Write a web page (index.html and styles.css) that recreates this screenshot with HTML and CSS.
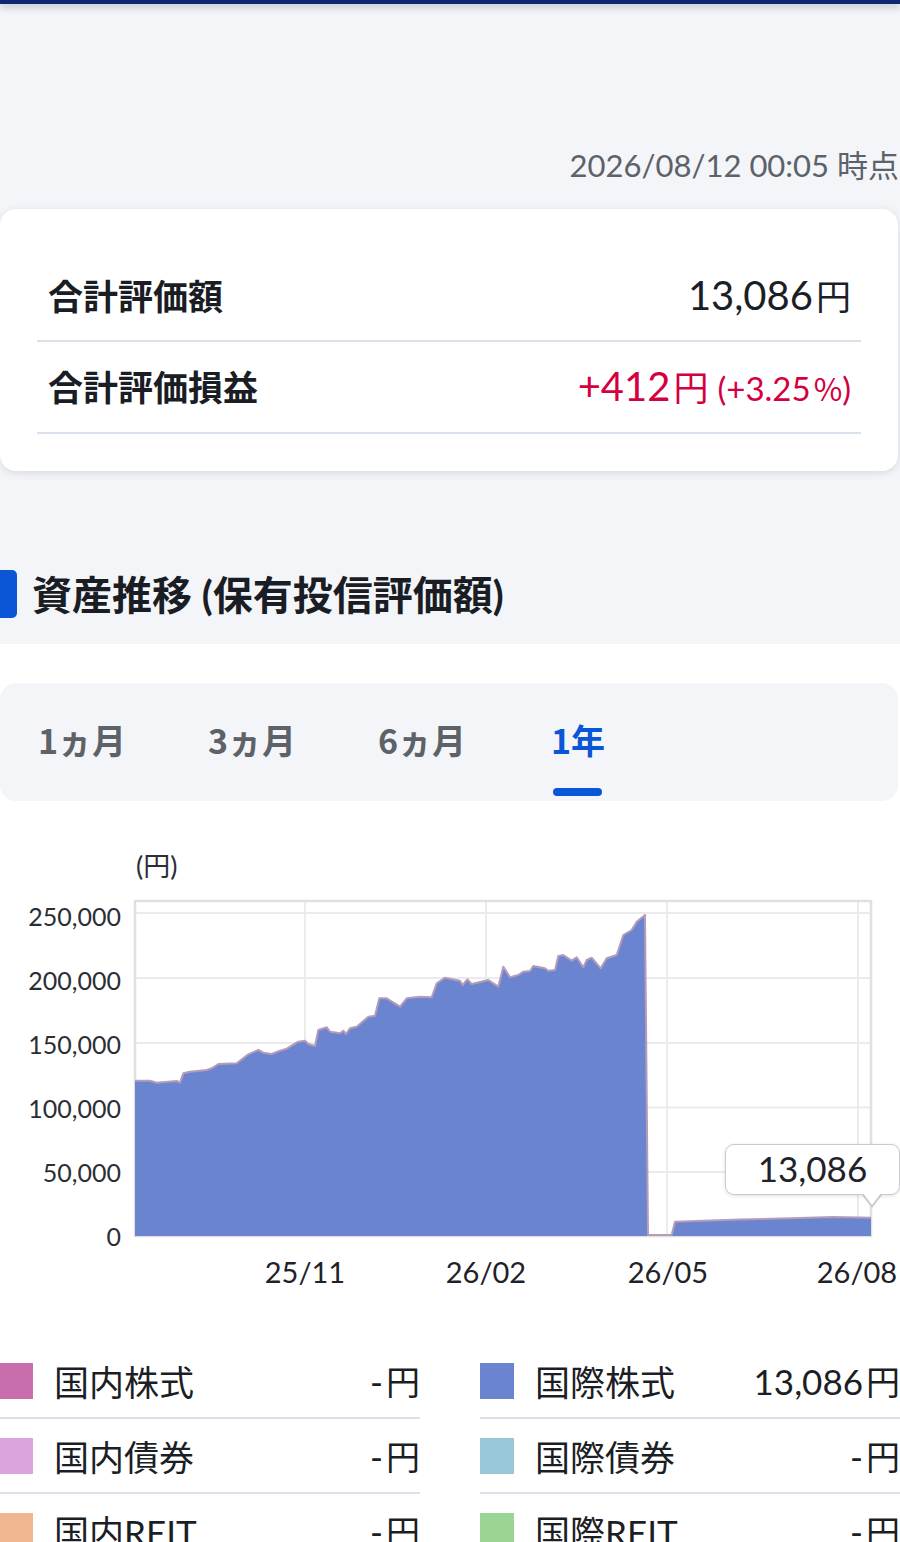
FILE: index.html
```html
<!DOCTYPE html>
<html lang="ja">
<head>
<meta charset="utf-8">
<title>資産推移</title>
<link rel="stylesheet" href="styles.css">
</head>
<body>
<div class="topbar"></div>
<div class="timestamp">2026/08/12 00:05 時点</div>

<section class="card">
  <div class="row row-total">
    <span class="label">合計評価額</span>
    <span class="value"><span class="num">13,086</span><span class="yen">円</span></span>
  </div>
  <div class="row row-gain">
    <span class="label">合計評価損益</span>
    <span class="value gain"><span class="num">+412</span><span class="yen">円</span><span class="pct">(+3.25<span class="pct-sign">%</span>)</span></span>
  </div>
</section>

<div class="section-head">
  <span class="head-bar"></span>
  <h2 class="head-title">資産推移 (保有投信評価額)</h2>
</div>

<section class="chart-section">
  <div class="tabs">
    <span class="tab">1ヵ月</span>
    <span class="tab">3ヵ月</span>
    <span class="tab">6ヵ月</span>
    <span class="tab active">1年</span>
  </div>

  <div class="chart">
    <svg class="chart-svg" width="900" height="500" viewBox="0 801 900 500" xmlns="http://www.w3.org/2000/svg">
      <g class="grid">
        <line x1="305" y1="901" x2="305" y2="1236"/>
        <line x1="486" y1="901" x2="486" y2="1236"/>
        <line x1="667" y1="901" x2="667" y2="1236"/>
        <line x1="858" y1="901" x2="858" y2="1236"/>
        <line x1="135" y1="913" x2="871" y2="913"/>
        <line x1="135" y1="978" x2="871" y2="978"/>
        <line x1="135" y1="1043" x2="871" y2="1043"/>
        <line x1="135" y1="1107.5" x2="871" y2="1107.5"/>
        <line x1="135" y1="1172" x2="871" y2="1172"/>
      </g>
      <g class="frame">
        <line x1="135" y1="901" x2="871" y2="901"/>
        <line x1="135" y1="900" x2="135" y2="1237"/>
        <line x1="871" y1="900" x2="871" y2="1237"/>
        <line x1="135" y1="1236" x2="871" y2="1236"/>
      </g>
      <path class="area" d="M135,1236 L135,1080.7 L150,1080.7 L156.7,1082.7 L176.7,1081 L180,1082.7 L183.3,1073.3 L190,1071.7 L206.7,1070 L211.7,1068.3 L218.3,1064 L236.7,1063.3 L248.3,1054.3 L258.3,1050 L263.3,1052.7 L271.7,1054 L280,1050.7 L286.7,1048.7 L298.3,1041.7 L305,1040.7 L308.3,1044 L315,1046 L318.3,1030 L326.7,1027.3 L330,1031.7 L340,1033.3 L343.3,1030.7 L346,1034 L350,1028.3 L356.7,1026.7 L368.3,1016.7 L375,1015.7 L379.3,998.3 L386.7,998.3 L400,1006.7 L406.7,998.3 L420,996.7 L431.7,997.3 L436.7,983.3 L445,977.7 L460,980.7 L462.7,985 L467.3,979.3 L471.7,984 L488.3,980 L498.3,986.7 L503.3,966.7 L510,977.3 L518.3,975 L523.3,971.7 L530,971 L533.3,966 L545,968.3 L548.3,970.7 L555,970 L558.3,956 L563.3,955 L571.7,960.7 L576.7,957.3 L583.3,967.3 L586.7,960 L591.7,957.7 L600.7,968.3 L606.7,958.3 L616.7,955 L623.3,935 L631.7,930 L636.7,921.7 L645,915 L648,1236 Z M671.7,1236 L675,1221.7 L740,1219.5 L800,1218 L833,1217 L871,1217.7 L871,1236 Z"/>
      <path class="line" d="M135,1080.7 L150,1080.7 L156.7,1082.7 L176.7,1081 L180,1082.7 L183.3,1073.3 L190,1071.7 L206.7,1070 L211.7,1068.3 L218.3,1064 L236.7,1063.3 L248.3,1054.3 L258.3,1050 L263.3,1052.7 L271.7,1054 L280,1050.7 L286.7,1048.7 L298.3,1041.7 L305,1040.7 L308.3,1044 L315,1046 L318.3,1030 L326.7,1027.3 L330,1031.7 L340,1033.3 L343.3,1030.7 L346,1034 L350,1028.3 L356.7,1026.7 L368.3,1016.7 L375,1015.7 L379.3,998.3 L386.7,998.3 L400,1006.7 L406.7,998.3 L420,996.7 L431.7,997.3 L436.7,983.3 L445,977.7 L460,980.7 L462.7,985 L467.3,979.3 L471.7,984 L488.3,980 L498.3,986.7 L503.3,966.7 L510,977.3 L518.3,975 L523.3,971.7 L530,971 L533.3,966 L545,968.3 L548.3,970.7 L555,970 L558.3,956 L563.3,955 L571.7,960.7 L576.7,957.3 L583.3,967.3 L586.7,960 L591.7,957.7 L600.7,968.3 L606.7,958.3 L616.7,955 L623.3,935 L631.7,930 L636.7,921.7 L645,915 L648,1235 L671.7,1235 L675,1221.7 L740,1219.5 L800,1218 L833,1217 L871,1217.7"/>
      <g class="ylabels">
        <text x="136" y="865" class="unit">(円)</text>
        <text x="121" y="916">250,000</text>
        <text x="121" y="980">200,000</text>
        <text x="121" y="1044">150,000</text>
        <text x="121" y="1108">100,000</text>
        <text x="121" y="1172">50,000</text>
        <text x="121" y="1236">0</text>
      </g>
      <g class="xlabels">
        <text x="305" y="1271">25/11</text>
        <text x="486" y="1271">26/02</text>
        <text x="668" y="1271">26/05</text>
        <text x="857" y="1271">26/08</text>
      </g>
    </svg>
    <div class="tooltip">13,086</div>
  </div>

  <div class="legend">
    <div class="legend-col">
      <div class="legend-row"><span class="swatch sw-dstock"></span><span class="lg-label">国内株式</span><span class="lg-value"><span class="num">-</span>円</span></div>
      <div class="legend-row"><span class="swatch sw-dbond"></span><span class="lg-label">国内債券</span><span class="lg-value"><span class="num">-</span>円</span></div>
      <div class="legend-row"><span class="swatch sw-dreit"></span><span class="lg-label">国内REIT</span><span class="lg-value"><span class="num">-</span>円</span></div>
    </div>
    <div class="legend-col">
      <div class="legend-row"><span class="swatch sw-istock"></span><span class="lg-label">国際株式</span><span class="lg-value"><span class="num">13,086</span>円</span></div>
      <div class="legend-row"><span class="swatch sw-ibond"></span><span class="lg-label">国際債券</span><span class="lg-value"><span class="num">-</span>円</span></div>
      <div class="legend-row"><span class="swatch sw-ireit"></span><span class="lg-label">国際REIT</span><span class="lg-value"><span class="num">-</span>円</span></div>
    </div>
  </div>
</section>
</body>
</html>
```

FILE: styles.css
```css
* { box-sizing: border-box; }

html, body {
  margin: 0;
  padding: 0;
}

body {
  width: 900px;
  background: #f3f5f9;
  font-family: Lato, "Noto Sans CJK JP", sans-serif;
  color: #1b1e25;
  overflow: hidden;
}

.topbar {
  height: 4px;
  background: #112670;
  box-shadow: 0 3px 7px rgba(0, 0, 0, 0.28);
  position: relative;
  z-index: 1;
}

.timestamp {
  margin-top: 141px;
  height: 40px;
  line-height: 40px;
  text-align: right;
  font-size: 31px;
  color: #5d6168;
  padding-right: 1px;
  white-space: nowrap;
}

.card {
  margin-top: 24px;
  margin-right: 2px;
  background: #ffffff;
  border-radius: 16px;
  box-shadow: 0 2px 8px rgba(30, 40, 60, 0.13);
  padding: 43px 37px 37px;
}

.row {
  display: flex;
  align-items: center;
  justify-content: space-between;
  padding: 0 10px 3px 11px;
  border-bottom: 2px solid #d9e1ea;
}

.row-total { height: 90px; }
.row-gain { height: 92px; }

.label {
  font-family: "Noto Sans CJK JP", sans-serif;
  font-weight: 700;
  font-size: 35px;
  color: #1a1d24;
}

.value {
  display: flex;
  align-items: baseline;
  color: #1b1e25;
}

.value .num {
  font-size: 40px;
  font-family: Lato, sans-serif;
}

.value .yen {
  font-family: "Noto Sans CJK JP", sans-serif;
  font-size: 35px;
  margin-left: 3px;
}

.gain { color: #d4003f; }

.gain .pct {
  font-size: 33px;
  margin-left: 9px;
}

.pct-sign {
  font-family: "Noto Sans CJK JP", sans-serif;
  font-size: 31px;
  margin-left: 3px;
}

.section-head {
  margin-top: 99px;
  display: flex;
  align-items: center;
  height: 48px;
}

.head-bar {
  width: 17px;
  height: 48px;
  background: #0b56d6;
  border-radius: 0 5px 5px 0;
  flex: none;
}

.head-title {
  margin: 0 0 0 15px;
  font-family: Lato, "Noto Sans CJK JP", sans-serif;
  font-weight: 700;
  font-size: 40px;
  line-height: 48px;
  color: #1a1d24;
  position: relative;
  top: 1px;
  white-space: nowrap;
}

.chart-section {
  margin-top: 26px;
  background: #ffffff;
  padding-top: 39px;
}

.tabs {
  margin-right: 2px;
  height: 118px;
  background: #f3f5f9;
  border-radius: 16px;
  display: flex;
  align-items: stretch;
  padding-left: 38px;
}

.tab {
  width: 170px;
  display: flex;
  align-items: center;
  padding-bottom: 5px;
  font-family: "Noto Sans CJK JP", sans-serif;
  font-weight: 700;
  font-size: 34px;
  color: #5d6168;
  position: relative;
}

.tab.active {
  color: #0b56d6;
  margin-left: 3px;
}

.tab.active::after {
  content: "";
  position: absolute;
  left: 2px;
  bottom: 5px;
  width: 49px;
  height: 8px;
  border-radius: 4px;
  background: #0b56d6;
}

.chart {
  position: relative;
  height: 500px;
}

.chart-svg {
  display: block;
}

.grid line {
  stroke: #ebebeb;
  stroke-width: 2;
}

.frame line {
  stroke: #e0e0e0;
  stroke-width: 2.5;
}

.area {
  fill: #6a84cf;
}

.line {
  fill: none;
  stroke: #b59cb9;
  stroke-width: 2;
  stroke-linejoin: round;
}

.ylabels text {
  font-family: Lato, "Noto Sans CJK JP", sans-serif;
  font-size: 25px;
  fill: #2b2e35;
  text-anchor: end;
  dominant-baseline: central;
}

.ylabels .unit {
  text-anchor: start;
  font-size: 27px;
}

.xlabels text {
  font-family: Lato, sans-serif;
  font-size: 29px;
  fill: #1f2229;
  text-anchor: middle;
  dominant-baseline: central;
}

.tooltip {
  position: absolute;
  left: 725px;
  top: 343px;
  width: 175px;
  height: 51px;
  background: #ffffff;
  border: 1.5px solid #c9cbd0;
  border-radius: 9px;
  box-shadow: 0 1px 4px rgba(0, 0, 0, 0.12);
  font-family: Lato, sans-serif;
  font-size: 35px;
  line-height: 47px;
  text-align: center;
  color: #1f2229;
}

.tooltip::before {
  content: "";
  position: absolute;
  left: 135px;
  top: 49px;
  width: 0;
  height: 0;
  border-left: 11px solid transparent;
  border-right: 11px solid transparent;
  border-top: 14px solid #c9cbd0;
}

.tooltip::after {
  content: "";
  position: absolute;
  left: 136.5px;
  top: 48px;
  width: 0;
  height: 0;
  border-left: 9.5px solid transparent;
  border-right: 9.5px solid transparent;
  border-top: 12.5px solid #ffffff;
}

.legend {
  padding-top: 43px;
  display: grid;
  grid-template-columns: 420px 420px;
  column-gap: 60px;
}

.legend-row {
  height: 75px;
  display: flex;
  align-items: center;
  border-bottom: 2px solid #d9e1ea;
}

.swatch {
  width: 34px;
  height: 36px;
  flex: none;
}

.legend-col:first-child .swatch { width: 33px; }

.sw-dstock { background: #c86eac; }
.sw-dbond { background: #dca3dc; }
.sw-dreit { background: #f0b690; }
.sw-istock { background: #6a84cf; }
.sw-ibond { background: #99c9d9; }
.sw-ireit { background: #9ad594; }

.lg-label {
  margin-left: 21px;
  font-family: Lato, "Noto Sans CJK JP", sans-serif;
  font-size: 35px;
  color: #1b1e25;
  flex: 1;
  white-space: nowrap;
}

.lg-value {
  font-family: "Noto Sans CJK JP", sans-serif;
  font-size: 34px;
  color: #1b1e25;
  white-space: nowrap;
}

.lg-value .num {
  font-family: Lato, sans-serif;
  font-size: 35px;
  margin-right: 3px;
}
```
